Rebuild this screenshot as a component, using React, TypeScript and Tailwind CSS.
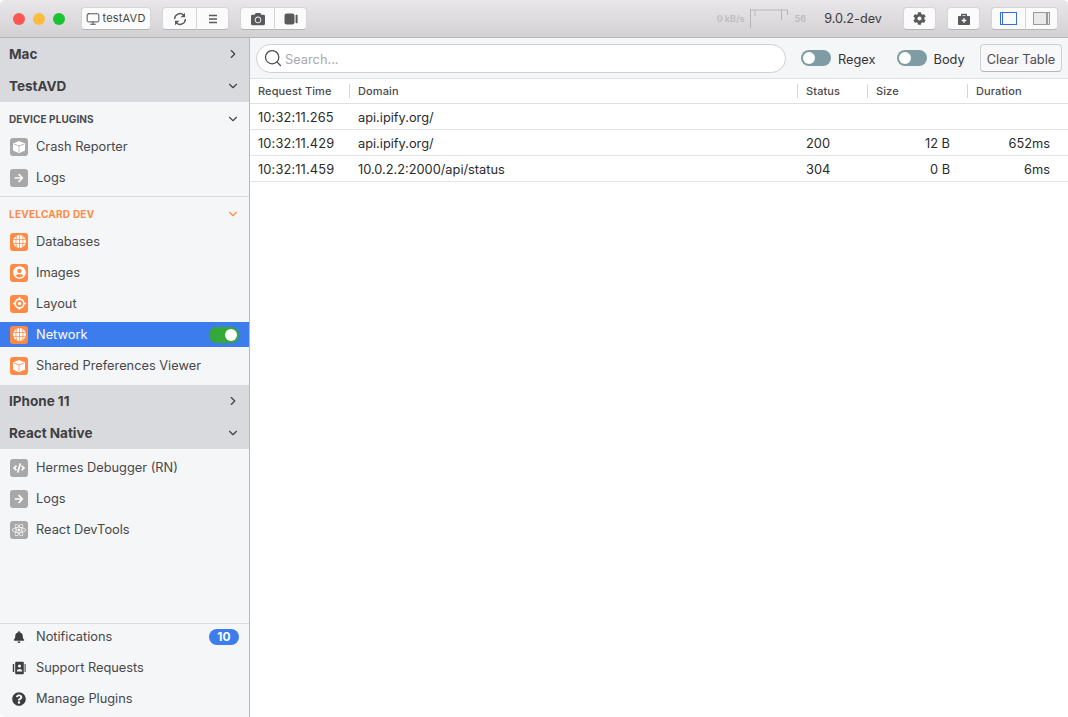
import type { ReactNode } from "react"
import { ChevronDown, ChevronRight, Monitor, Search } from "lucide-react"
import {
  FaArrowRight,
  FaBell,
  FaBriefcaseMedical,
  FaCamera,
  FaCode,
  FaCog,
  FaQuestionCircle,
  FaReact,
  FaUserCircle,
} from "react-icons/fa"
import { BsBoxFill } from "react-icons/bs"

const Globe = () => (
  <svg viewBox="0 0 12 12" className="h-[13px] w-[13px]">
    <circle cx="6" cy="6" r="6" fill="#fff" />
    <path d="M0 4.2h12M0 7.8h12M6 0v12M3.6 .6c-1.2 3-1.2 7.8 0 10.8M8.4 .6c1.2 3 1.2 7.8 0 10.8" stroke="#ff8a45" strokeWidth=".7" fill="none" />
  </svg>
)

const Target = () => (
  <svg viewBox="0 0 12 12" className="h-[13px] w-[13px]">
    <path d="M6 0v2.5M6 9.5V12M0 6h2.5M9.5 6H12" stroke="#fff" strokeWidth="1.4" />
    <circle cx="6" cy="6" r="4" fill="none" stroke="#fff" strokeWidth="1.5" />
    <circle cx="6" cy="6" r="1.6" fill="#fff" />
  </svg>
)

const Contacts = () => (
  <svg viewBox="0 0 14 14" className="h-3.5 w-3.5" fill="#3d3d40">
    <rect x="3.2" y=".8" width="8.6" height="12.4" rx="1" />
    <rect x=".8" y="3" width="1.4" height="8" />
    <rect x="12.6" y="3" width="1" height="8" />
    <circle cx="7.5" cy="5" r="1.6" fill="#f5f6f8" />
    <path d="M4.8 10.4c0-3.2 5.4-3.2 5.4 0z" fill="#f5f6f8" />
  </svg>
)

const Sync = () => (
  <svg viewBox="0 0 14 14" className="h-[14px] w-[14px]" fill="#5a5a5d">
    <path d="M1.6 7a5.4 5.4 0 0 1 9-4" fill="none" stroke="#5a5a5d" strokeWidth="1.4" />
    <path d="M12 .8v4.4H7.6z" />
    <path d="M12.4 7a5.4 5.4 0 0 1-9 4" fill="none" stroke="#5a5a5d" strokeWidth="1.4" />
    <path d="M2 13.2V8.8h4.4z" />
  </svg>
)

const Lines = () => (
  <svg viewBox="0 0 10 10" className="h-[10px] w-[10px]" fill="none" stroke="#5a5a5d" strokeWidth="1.3">
    <path d="M1 1.5h8M1 5h8M1 8.5h8" />
  </svg>
)

const Video = () => (
  <svg viewBox="0 0 14 12" className="h-3 w-[14px]" fill="#5a5a5d">
    <rect x=".5" y=".5" width="10" height="11" rx="2.2" />
    <rect x="11.6" y="1.8" width="2" height="8.4" rx=".7" />
  </svg>
)

function Tile({ color = "orange", children }: { color?: "orange" | "gray"; children: ReactNode }) {
  return (
    <span
      className={
        color === "orange"
          ? "flex h-[18px] w-[18px] shrink-0 items-center justify-center rounded-[3px] bg-[#ff8a45] text-white"
          : "flex h-[18px] w-[18px] shrink-0 items-center justify-center rounded-[3px] bg-[#a8a8a8] text-white"
      }
    >
      {children}
    </span>
  )
}

function DeviceHeader({ label, open }: { label: string; open?: boolean }) {
  return (
    <div className="flex h-8 items-center justify-between bg-[#d9dade] pl-[9px] pr-[9px] text-[13.5px] font-bold text-[#3f3f42]">
      <span>{label}</span>
      {open ? <ChevronDown size={14} strokeWidth={2} /> : <ChevronRight size={14} strokeWidth={2} />}
    </div>
  )
}

function SectionHeader({ label, orange }: { label: string; orange?: boolean }) {
  return (
    <div
      className={
        orange
          ? "-mb-px flex h-[20px] items-center justify-between pl-[9px] pr-[9px] text-[10px] font-bold tracking-[0.25px] text-[#ff8a45]"
          : "-mb-px flex h-[20px] items-center justify-between pl-[9px] pr-[9px] text-[10px] font-bold tracking-[0.1px] text-[#4a4a4d]"
      }
    >
      <span>{label}</span>
      <ChevronDown size={14} strokeWidth={2} />
    </div>
  )
}

function Row({ icon, label, active, right }: { icon: ReactNode; label: string; active?: boolean; right?: ReactNode }) {
  return (
    <div
      className={
        active
          ? "flex h-[25px] items-center gap-2 bg-[#3d7cec] pl-[10px] pr-[10px] text-[12.8px] text-white"
          : "flex h-[25px] items-center gap-2 pl-[10px] pr-[10px] text-[12.8px] text-[#47474a]"
      }
    >
      {icon}
      <span className="flex-1 truncate">{label}</span>
      {right}
    </div>
  )
}

function Sidebar() {
  return (
    <aside className="flex w-[250px] shrink-0 flex-col border-r border-[#b9b9bb] bg-[#f5f6f8]">
      <DeviceHeader label="Mac" />
      <DeviceHeader label="TestAVD" open />

      <div className="flex flex-col gap-[6px] border-b border-[#d9dade] pb-[6px] pt-[7px]">
        <SectionHeader label="DEVICE PLUGINS" />
        <Row icon={<Tile color="gray"><BsBoxFill size={12} /></Tile>} label="Crash Reporter" />
        <Row icon={<Tile color="gray"><FaArrowRight size={10} /></Tile>} label="Logs" />
      </div>

      <div className="flex flex-col gap-[6px] pb-[7px] pt-[7px]">
        <SectionHeader label="LEVELCARD DEV" orange />
        <Row icon={<Tile><Globe /></Tile>} label="Databases" />
        <Row icon={<Tile><FaUserCircle size={13} /></Tile>} label="Images" />
        <Row icon={<Tile><Target /></Tile>} label="Layout" />
        <Row
          icon={<Tile><Globe /></Tile>}
          label="Network"
          active
          right={
            <span className="flex h-4 w-[30px] items-center justify-end rounded-full bg-[#35a83a] pr-[2px]">
              <span className="h-3 w-3 rounded-full bg-white" />
            </span>
          }
        />
        <Row icon={<Tile><BsBoxFill size={12} /></Tile>} label="Shared Preferences Viewer" />
      </div>

      <DeviceHeader label="IPhone 11" />
      <DeviceHeader label="React Native" open />

      <div className="flex flex-col gap-[6px] pt-[6px]">
        <Row icon={<Tile color="gray"><FaCode size={12} /></Tile>} label="Hermes Debugger (RN)" />
        <Row icon={<Tile color="gray"><FaArrowRight size={10} /></Tile>} label="Logs" />
        <Row icon={<Tile color="gray"><FaReact size={14} /></Tile>} label="React DevTools" />
      </div>

      <div className="mt-auto flex flex-col gap-[6px] border-t border-[#d9dade] pb-[6px]">
        <Row
          icon={<span className="flex w-[18px] justify-center text-[#3d3d40]"><FaBell size={12} /></span>}
          label="Notifications"
          right={
            <span className="flex h-4 w-[30px] items-center justify-center rounded-full bg-[#3d7cec] text-[12px] font-bold text-white">
              10
            </span>
          }
        />
        <Row icon={<span className="flex w-[18px] justify-center"><Contacts /></span>} label="Support Requests" />
        <Row
          icon={<span className="flex w-[18px] justify-center text-[#3d3d40]"><FaQuestionCircle size={14} /></span>}
          label="Manage Plugins"
        />
      </div>
    </aside>
  )
}

const btn = "flex h-[23px] items-center justify-center border border-[#d5d4d6] border-b-[#b5b4b6] bg-[#fbfbfb] text-[#5a5a5d]"

function TitleBar() {
  return (
    <header className="flex h-[38px] shrink-0 items-center border-b border-[#b4b4b6] bg-gradient-to-b from-[#e9e7e9] to-[#d2d0d2] pl-[13px] pr-[10px]">
      <div className="flex gap-2">
        <span className="h-3 w-3 rounded-full bg-[#fc5753]" />
        <span className="h-3 w-3 rounded-full bg-[#fdbc40]" />
        <span className="h-3 w-3 rounded-full bg-[#19c332]" />
      </div>

      <div className={`${btn} ml-[16px] w-[70px] gap-[2px] rounded-[4px] text-[11px] tracking-[0.2px] text-[#47474a]`}>
        <Monitor size={14} strokeWidth={1.6} />
        testAVD
      </div>

      <div className="ml-[11px] flex">
        <div className={`${btn} w-[35px] rounded-l-[4px]`}>
          <Sync />
        </div>
        <div className={`${btn} -ml-px w-[33px] rounded-r-[4px]`}>
          <Lines />
        </div>
      </div>

      <div className="ml-[11px] flex">
        <div className={`${btn} w-[35px] rounded-l-[4px]`}>
          <FaCamera size={14} />
        </div>
        <div className={`${btn} -ml-px w-[33px] rounded-r-[4px]`}>
          <Video />
        </div>
      </div>

      <div className="ml-auto flex items-center">
        <span className="text-[9px] font-bold text-[#c0bfc1]">0 kB/s</span>
        <svg viewBox="0 0 40 20" className="ml-[5px] h-5 w-10" fill="none" stroke="#b5b4b6" strokeWidth="1">
          <path d="M.5 0v19M.5 1h37M5 1v6M31.5 1v10M37.5 1v5" />
        </svg>
        <span className="ml-[5px] text-[9px] font-bold text-[#c0bfc1]">56</span>
        <span className="ml-[18px] text-[12.7px] text-[#3d3d40]">9.0.2-dev</span>

        <div className={`${btn} ml-[21px] w-[33px] rounded-[4px]`}>
          <FaCog size={13} />
        </div>
        <div className={`${btn} ml-[11px] w-[33px] rounded-[4px]`}>
          <FaBriefcaseMedical size={12} />
        </div>

        <div className="ml-[11px] flex">
          <div className={`${btn} w-[35px] rounded-l-[4px]`}>
            <span className="flex h-[13px] w-[17px] border border-[#2f6fe0] pl-[1px]">
              <span className="w-[1px] bg-[#2f6fe0]" />
            </span>
          </div>
          <div className={`${btn} -ml-px w-[33px] rounded-r-[4px]`}>
            <span className="flex h-[13px] w-[17px] justify-end border border-[#9a9a9c] bg-[#e9e9ea] pr-[1px]">
              <span className="w-[2px] bg-[#9a9a9c]" />
            </span>
          </div>
        </div>
      </div>
    </header>
  )
}

function Toggle({ label }: { label: string }) {
  return (
    <div className="flex items-center gap-[7px] text-[12.8px] text-[#333335]">
      <span className="flex h-4 w-[30px] items-center rounded-full bg-[#7f9ba3] pl-[2px]">
        <span className="h-3 w-3 rounded-full bg-white" />
      </span>
      <span className="pt-[3px]">{label}</span>
    </div>
  )
}

const rows = [
  { time: "10:32:11.265", domain: "api.ipify.org/", status: "", size: "", duration: "" },
  { time: "10:32:11.429", domain: "api.ipify.org/", status: "200", size: "12 B", duration: "652ms" },
  { time: "10:32:11.459", domain: "10.0.2.2:2000/api/status", status: "304", size: "0 B", duration: "6ms" },
]

const grid = "grid grid-cols-[100px_448px_70px_100px_100px]"
const headCell = "-ml-px flex h-[14px] items-center border-l border-[#d5d5d7] pl-2"

function NetworkTable() {
  return (
    <main className="flex min-w-0 flex-1 flex-col bg-white">
      <div className="flex h-[41px] shrink-0 items-center border-b border-[#e0e0e2] bg-[#f5f6f8] pl-[6px] pr-[6px]">
        <div className="flex h-[29px] w-[530px] items-center gap-[2px] rounded-full border border-[#d0d0d2] bg-white pl-[6px]">
          <Search size={20} strokeWidth={1.5} className="text-[#4a4a4d]" />
          <span className="pt-[3px] text-[12.8px] text-[#a8a8ab]">Search...</span>
        </div>
        <div className="ml-[15px]"><Toggle label="Regex" /></div>
        <div className="ml-[21px]"><Toggle label="Body" /></div>
        <div className="ml-auto flex h-[28px] w-[82px] items-center justify-center rounded-[4px] border border-[#d0d0d2] border-b-[#b5b5b7] bg-[#f8f8f8] pt-[3px] text-[12.8px] text-[#4d4d50]">
          Clear Table
        </div>
      </div>

      <div className={`${grid} h-[25px] shrink-0 items-center border-b border-[#e0e0e2] text-[11px] font-medium tracking-[0.12px] text-[#4a4a4d]`}>
        <span className="pl-2">Request Time</span>
        <span className={headCell}>Domain</span>
        <span className={headCell}>Status</span>
        <span className={headCell}>Size</span>
        <span className={headCell}>Duration</span>
      </div>

      {rows.map((row) => (
        <div key={row.time} className={`${grid} h-[26px] shrink-0 items-center border-b border-[#e4e4e6] pt-[2px] text-[12.8px] text-[#2a2a2c]`}>
          <span className="pl-2 tracking-[0.15px]">{row.time}</span>
          <span className="pl-2">{row.domain}</span>
          <span className="pl-2">{row.status}</span>
          <span className="pr-[18px] text-right">{row.size}</span>
          <span className="pr-[18px] text-right">{row.duration}</span>
        </div>
      ))}
    </main>
  )
}

export default function App() {
  return (
    <div className="flex h-[717px] w-[1068px] flex-col overflow-hidden rounded-[5px] font-['Inter',sans-serif]">
      <TitleBar />
      <div className="flex min-h-0 flex-1">
        <Sidebar />
        <NetworkTable />
      </div>
    </div>
  )
}
